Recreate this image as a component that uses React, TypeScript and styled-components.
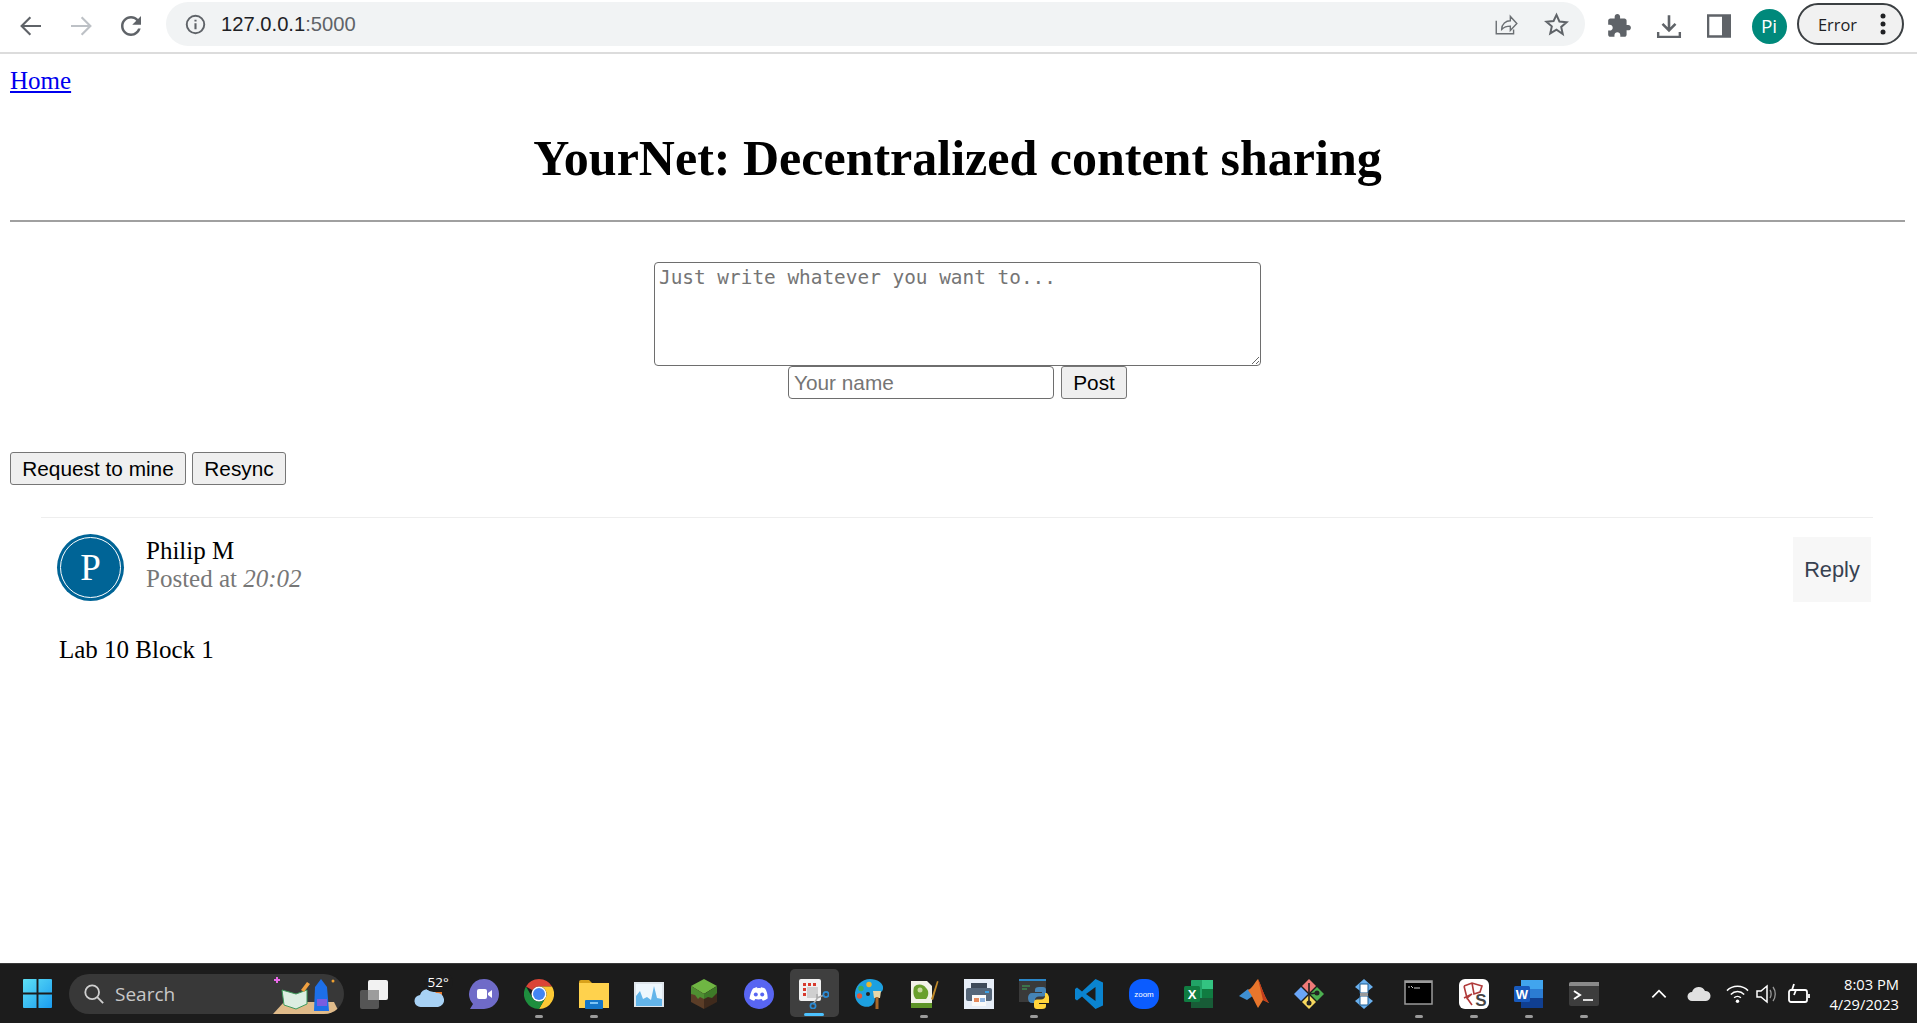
import styled, { createGlobalStyle } from "styled-components";
import type { ReactNode } from "react";

const GlobalStyle = createGlobalStyle`
  html, body { margin: 0; padding: 0; height: 100%; overflow: hidden; background: #fff; }
  body { font-family: "Liberation Serif", "Times New Roman", serif; font-size: 25px; color: #000; }
`;

const Page = styled.div`
  display: flex;
  flex-direction: column;
  height: 1023px;
`;

/* browser chrome */
const Toolbar = styled.header`
  display: flex;
  align-items: center;
  height: 52px;
  flex: none;
  padding-left: 6px;
  border-bottom: 2px solid #dcdcdc;
  background: #fff;
`;
const ToolCell = styled.div`
  display: flex;
  align-items: center;
  justify-content: center;
  width: 50px;
  height: 48px;
`;
const Omnibox = styled.div`
  display: flex;
  align-items: center;
  width: 1419px;
  height: 44px;
  margin: 0 9px 4px 10px;
  padding: 0 16px 0 19px;
  box-sizing: border-box;
  border-radius: 22px;
  background: #f1f3f4;
`;
const Url = styled.span`
  margin-left: 15px;
  font-family: "Liberation Sans", Arial, sans-serif;
  font-size: 20.2px;
  color: #202124;
  span { color: #5f6368; }
`;
const OmniActions = styled.div`
  display: flex;
  align-items: center;
  gap: 25px;
  margin-left: auto;
`;
const Avatar = styled.div`
  display: flex;
  align-items: center;
  justify-content: center;
  width: 35px;
  height: 35px;
  border-radius: 50%;
  background: #00897b;
  color: #fff;
  font-family: "Open Sans", sans-serif;
  font-size: 19px;
`;
const ErrorPill = styled.div`
  display: flex;
  align-items: center;
  justify-content: space-between;
  width: 107px;
  height: 42px;
  margin: 0 0 4px 3px;
  padding: 0 16px 0 19px;
  box-sizing: border-box;
  border: 2px solid #3c4043;
  border-radius: 21px;
  background: #f1f1f1;
  color: #202124;
  font-family: "Open Sans", sans-serif;
  font-size: 16.4px;
`;

/* page content */
const Main = styled.main`
  flex: 1;
  padding: 13px 12px 0 10px;
  overflow: hidden;
`;
const HomeLink = styled.a`
  color: #00e;
  text-decoration: underline;
`;
const Title = styled.h1`
  margin: 34px 0 33px;
  font-size: 50px;
  text-align: center;
`;
const Rule = styled.hr`
  margin: 0;
  height: 2px;
  border: 0;
  background: #a0a0a0;
`;
const PostForm = styled.form`
  display: flex;
  flex-direction: column;
  align-items: center;
  margin-top: 40px;
`;
const Message = styled.textarea`
  display: block;
  width: 607px;
  height: 104px;
  padding: 3px 4px;
  box-sizing: border-box;
  border: 1px solid #6e6e6e;
  border-radius: 4px;
  font-family: "DejaVu Sans Mono", monospace;
  font-size: 19.4px;
  &::placeholder { color: #757575; }
`;
const FormRow = styled.div`
  display: flex;
  gap: 7px;
`;
const NameInput = styled.input`
  width: 266px;
  height: 33px;
  padding: 0 5px;
  box-sizing: border-box;
  border: 1px solid #6e6e6e;
  border-radius: 4px;
  font-family: "Liberation Sans", Arial, sans-serif;
  font-size: 20.8px;
  &::placeholder { color: #757575; }
`;
const Button = styled.button<{ $width: number }>`
  width: ${(p) => p.$width}px;
  height: 33px;
  padding: 0;
  border: 1px solid #767676;
  border-radius: 3px;
  background: #efefef;
  color: #000;
  font-family: "Liberation Sans", Arial, sans-serif;
  font-size: 20.8px;
`;
const Actions = styled.div`
  display: flex;
  gap: 6px;
  margin: 53px 0 32px;
`;
const Card = styled.article`
  margin: 0 32px 0 31px;
  border-top: 1px solid #eee;
`;
const CardHeader = styled.div`
  display: flex;
  align-items: flex-start;
  padding: 16px 2px 0 16px;
`;
const Badge = styled.div`
  position: relative;
  display: flex;
  align-items: center;
  justify-content: center;
  flex: none;
  width: 67px;
  height: 67px;
  border-radius: 50%;
  background: #006496;
  color: #fff;
  font-size: 37px;
  &::after {
    content: "";
    position: absolute;
    inset: 3px;
    border: 1px solid #fff;
    border-radius: 50%;
  }
`;
const Meta = styled.div`
  margin: 3px 0 0 22px;
  line-height: 28px;
`;
const Stamp = styled.div`
  color: #777;
`;
const Reply = styled.div`
  display: flex;
  align-items: center;
  justify-content: center;
  width: 78px;
  height: 65px;
  margin: 3px 0 0 auto;
  background: #f7f7f7;
  color: #374151;
  font-family: "Liberation Sans", Arial, sans-serif;
  font-size: 21.8px;
`;
const CardBody = styled.p`
  margin: 34px 0 0 18px;
  line-height: 28px;
`;

/* windows taskbar */
const Taskbar = styled.footer`
  display: flex;
  align-items: center;
  flex: none;
  height: 60px;
  padding-left: 10px;
  background: #1c1c1c;
  border-top: 1px solid #3a3a3a;
  box-sizing: border-box;
`;
const SearchPill = styled.div`
  position: relative;
  display: flex;
  align-items: center;
  width: 275px;
  height: 40px;
  margin: 0 2.5px 0 4px;
  padding-left: 14px;
  box-sizing: border-box;
  border-radius: 20px;
  background: #383838;
  color: #c8c8c8;
  font-family: "Open Sans", sans-serif;
  font-size: 19px;
  overflow: hidden;
  span { margin-left: 10px; }
`;
const SearchArt = styled.div`
  position: absolute;
  right: 4px;
  top: 0;
  line-height: 0;
`;
const TaskCell = styled.div<{ $active?: boolean }>`
  position: relative;
  display: flex;
  align-items: center;
  justify-content: center;
  flex: none;
  width: 55px;
  height: 58px;
  &::before {
    content: "";
    position: absolute;
    display: ${(p) => (p.$active ? "block" : "none")};
    inset: 4px 3px 6px;
    border-radius: 5px;
    background: #3f3f3f;
  }
  svg { position: relative; }
`;
const RunDot = styled.div<{ $active?: boolean }>`
  position: absolute;
  left: 50%;
  bottom: ${(p) => (p.$active ? "7px" : "5px")};
  width: ${(p) => (p.$active ? "20px" : "8px")};
  height: 3px;
  transform: translateX(-50%);
  border-radius: 2px;
  background: ${(p) => (p.$active ? "#4cc2ff" : "#9a9a9a")};
`;
const TempChip = styled.div`
  position: absolute;
  top: 8px;
  left: 22px;
  padding: 0 4px;
  border-radius: 10px;
  background: #1c1c1c;
  color: #fff;
  font-family: "Open Sans", sans-serif;
  font-size: 13.5px;
  line-height: 19px;
`;
const Tray = styled.div`
  display: flex;
  align-items: center;
  height: 100%;
  margin-left: auto;
  padding-right: 18px;
`;
const TrayCell = styled.div<{ $width: number }>`
  display: flex;
  align-items: center;
  justify-content: center;
  width: ${(p) => p.$width}px;
`;
const Clock = styled.div`
  width: 80px;
  color: #fff;
  font-family: "Open Sans", sans-serif;
  font-size: 14.7px;
  line-height: 20px;
  text-align: right;
  white-space: nowrap;
`;

const Svg = ({ size, box = 24, children }: { size: number; box?: number; children: ReactNode }) => (
  <svg width={size} height={size} viewBox={`0 0 ${box} ${box}`} fill="none">
    {children}
  </svg>
);

const Arrow = ({ flip, color }: { flip?: boolean; color: string }) => (
  <Svg size={30}>
    <path
      d={flip ? "M4 12h15M12.5 5l7 7-7 7" : "M20 12H5M11.5 5l-7 7 7 7"}
      stroke={color}
      strokeWidth="1.7"
    />
  </Svg>
);
const Reload = () => (
  <Svg size={30}>
    <path
      fill="#5f6368"
      d="M17.65 6.35C16.2 4.9 14.21 4 12 4c-4.42 0-7.99 3.58-7.99 8s3.57 8 7.99 8c3.73 0 6.84-2.55 7.73-6h-2.08c-.82 2.33-3.04 4-5.65 4-3.31 0-6-2.69-6-6s2.69-6 6-6c1.66 0 3.14.69 4.22 1.78L13 11h7V4l-2.35 2.35z"
    />
  </Svg>
);
const Info = () => (
  <Svg size={21}>
    <circle cx="12" cy="12" r="10" stroke="#5f6368" strokeWidth="2.2" />
    <path d="M12 10.5v7M12 6.5v2" stroke="#5f6368" strokeWidth="2.4" />
  </Svg>
);
const Share = () => (
  <Svg size={26}>
    <path
      d="M3 9v12h16v-4M8 17c0-5 4-8 8-8V5l6 6.5L16 18v-4c-3 0-6 1-8 3z"
      stroke="#6b6f73"
      strokeWidth="1.3"
    />
  </Svg>
);
const Star = () => (
  <Svg size={25}>
    <path
      d="M12 2.8l2.8 6.3 6.9.7-5.2 4.5 1.5 6.8L12 17l-6 3.6 1.5-6.8-5.2-4.5 6.9-.7z"
      stroke="#5f6368"
      strokeWidth="1.9"
    />
  </Svg>
);
const Puzzle = () => (
  <Svg size={26}>
    <path
      fill="#5f6368"
      d="M20.5 11H19V7c0-1.1-.9-2-2-2h-4V3.5C13 2.12 11.88 1 10.5 1S8 2.12 8 3.5V5H4c-1.1 0-1.99.9-1.99 2v3.8H3.5c1.49 0 2.7 1.21 2.7 2.7s-1.21 2.7-2.7 2.7H2V20c0 1.1.9 2 2 2h3.8v-1.5c0-1.49 1.21-2.7 2.7-2.7 1.49 0 2.7 1.21 2.7 2.7V22H17c1.1 0 2-.9 2-2v-4h1.5c1.38 0 2.5-1.12 2.5-2.5S21.88 11 20.5 11z"
    />
  </Svg>
);
const Download = () => (
  <Svg size={26}>
    <path d="M12 2v13M6 10l6 6 6-6" stroke="#5f6368" strokeWidth="2.4" />
    <path d="M2 17.5V22h20v-4.5" stroke="#5f6368" strokeWidth="2.2" />
  </Svg>
);
const SidePanel = () => (
  <Svg size={24}>
    <path d="M1 1.5h22v21H1z" stroke="#5f6368" strokeWidth="2.6" />
    <path d="M15 1.5h8v21h-8z" fill="#5f6368" />
  </Svg>
);
const Dots = () => (
  <svg width="6" height="24" viewBox="0 0 6 24">
    <circle cx="3" cy="4" r="2.5" fill="#202124" />
    <circle cx="3" cy="12" r="2.5" fill="#202124" />
    <circle cx="3" cy="20" r="2.5" fill="#202124" />
  </svg>
);

const taskIcons: { key: string; dot?: boolean; active?: boolean; chip?: string; art: ReactNode }[] = [
  {
    key: "taskview",
    art: (
      <>
        <rect x="1" y="11" width="19" height="19" rx="2" fill="#555" />
        <rect x="9" y="1" width="20" height="20" rx="2" fill="#f2f2f2" />
        <rect x="9" y="11" width="11" height="10" fill="#9c9c9c" />
      </>
    ),
  },
  {
    key: "weather",
    chip: "52°",
    art: (
      <>
        <rect x="14" y="11" width="14" height="8" fill="#e8792c" />
        <path d="M7 28a6 6 0 0 1-1-12 9 9 0 0 1 16-2 7 7 0 0 1 2 14z" fill="#a8d2f5" />
      </>
    ),
  },
  {
    key: "teams",
    art: (
      <>
        <path d="M15 0a15 15 0 0 1 0 30H1l3-5A15 15 0 0 1 15 0z" fill="#6f6bc8" />
        <rect x="8" y="10" width="10" height="10" rx="2" fill="#fff" />
        <path d="M19 14l4-3v8l-4-3z" fill="#fff" />
      </>
    ),
  },
  {
    key: "chrome",
    dot: true,
    art: (
      <>
        <path d="M15 0a15 15 0 0 1 13 7.5H15a7.5 7.5 0 0 0-6.5 3.75L2 7.5A15 15 0 0 1 15 0z" fill="#db4437" />
        <path d="M28 7.5A15 15 0 0 1 15 30l6.5-11.25A7.5 7.5 0 0 0 15 7.5z" fill="#fcc934" />
        <path d="M15 30A15 15 0 0 1 2 7.5l6.5 11.25a7.5 7.5 0 0 0 13 0z" fill="#1e8e3e" />
        <circle cx="15" cy="15" r="7.5" fill="#fff" />
        <circle cx="15" cy="15" r="6" fill="#4285f4" />
      </>
    ),
  },
  {
    key: "explorer",
    dot: true,
    art: (
      <>
        <path d="M0 3a2 2 0 0 1 2-2h8l3 3h-13z" fill="#d9a21b" />
        <path d="M0 4h30v25H0z" fill="#ffd24d" />
        <rect x="6" y="21" width="18" height="9" rx="1" fill="#1577c9" />
        <rect x="11" y="23" width="8" height="2" fill="#7cc4f5" />
      </>
    ),
  },
  {
    key: "monitor",
    art: (
      <>
        <rect x="0" y="3" width="30" height="25" fill="#dfe6ec" />
        <rect x="2" y="5" width="26" height="21" fill="#eef7fd" />
        <path d="M2 17l4-5 3 8 4-2 4 3 3-14 3 12 5 1v7H2z" fill="#63b5ea" />
      </>
    ),
  },
  {
    key: "minecraft",
    art: (
      <>
        <path d="M15 0l13 7-13 8L2 7z" fill="#6fb643" />
        <path d="M2 7l13 8v15L2 23z" fill="#5b3d27" />
        <path d="M28 7l-13 8v15l13-7z" fill="#3f2a1c" />
        <path d="M2 7l13 8v5l-4-2-2 2-3-4-4-1z" fill="#4f8f32" />
        <path d="M28 7l-13 8v5l4-2 4 1 5-5z" fill="#3e7a28" />
      </>
    ),
  },
  {
    key: "discord",
    art: (
      <>
        <circle cx="15" cy="15" r="15" fill="#5865f2" />
        <path
          d="M9 9.5c2-1 3.5-1.3 4-1.3l.5 1c1-.2 2-.2 3 0l.5-1c.5 0 2 .3 4 1.3 2 3 2.8 6.5 2.6 10-1.6 1.2-3.2 1.9-4.8 2.3l-1.1-1.8c-2 .6-4.4.6-6.4 0l-1.1 1.8c-1.6-.4-3.2-1.1-4.8-2.3C6.2 16 7 12.5 9 9.5z"
          fill="#fff"
        />
        <circle cx="11.8" cy="15.5" r="2" fill="#5865f2" />
        <circle cx="18.2" cy="15.5" r="2" fill="#5865f2" />
      </>
    ),
  },
  {
    key: "snip",
    active: true,
    art: (
      <>
        <rect x="0" y="0" width="22" height="22" rx="2" fill="#f1f1f1" />
        <path d="M4 4h3v3H4zM9 4h3v3H9zM14 4h3v3h-3zM4 9h3v3H4zM4 14h3v3H4z" fill="#d83b2d" />
        <path d="M8 8h11v11H8z" fill="#cfcfcf" />
        <path d="M18 15v5M18 20l-4 5M18 19l7-3" stroke="#aaa" strokeWidth="1.6" />
        <circle cx="27" cy="15.5" r="2.6" stroke="#2a8ad4" strokeWidth="1.7" />
        <circle cx="14" cy="27" r="2.6" stroke="#2a8ad4" strokeWidth="1.7" />
      </>
    ),
  },
  {
    key: "palette",
    art: (
      <>
        <path d="M1 17C0 7 8 0 16 0c7 0 14 4 13 10-.5 4-5 4-7 5-2 2 0 7-3 10-3 5-16 4-18-8z" fill="#1da0e0" />
        <circle cx="15" cy="5.5" r="2.7" fill="#e8b731" />
        <circle cx="7" cy="9.5" r="2.7" fill="#3cae5c" />
        <circle cx="5.5" cy="17" r="2.7" fill="#e0593a" />
        <circle cx="14" cy="15" r="2" fill="#222" />
        <path d="M19 12h8l-1 7h-6z" fill="#e8d7a8" />
        <rect x="21.5" y="18" width="3" height="12" fill="#a8682a" />
      </>
    ),
  },
  {
    key: "notepad",
    dot: true,
    art: (
      <>
        <path d="M2 2h16l5 5v22H2z" fill="#f2f2e8" />
        <path d="M5 8c3-4 10-3 12 1 3 2 3 8 0 11H7c-3-3-3-8-2-12z" fill="#6aa02d" />
        <circle cx="11" cy="11" r="2.5" fill="#c8d8a0" />
        <path d="M2 24h21v5H2z" fill="#5e9428" />
        <path d="M22 20l6-18 1.5.5L24 21z" fill="#c08a2a" />
      </>
    ),
  },
  {
    key: "printer",
    art: (
      <>
        <rect width="30" height="30" fill="#e7eef8" />
        <rect x="7" y="4" width="16" height="6" fill="#3e4a59" />
        <rect x="2" y="9" width="26" height="13" rx="2" fill="#56677a" />
        <rect x="21" y="12" width="4" height="2" fill="#3aa0e6" />
        <rect x="8" y="16" width="14" height="11" fill="#fafafa" />
        <rect x="10" y="19" width="5" height="4" fill="#e58a5c" />
        <rect x="16" y="19" width="5" height="4" fill="#8fb4e0" />
      </>
    ),
  },
  {
    key: "python",
    dot: true,
    art: (
      <>
        <rect x="0" y="0" width="27" height="23" fill="#3a3a3a" />
        <rect x="0" y="0" width="27" height="2" fill="#2a86c8" />
        <path d="M3 7h8M3 10h5" stroke="#3fae5a" strokeWidth="1.2" />
        <path d="M24 8h-4c-3 0-4 1-4 3v2h7v1H13c-2.5 0-4 2-4 5s1.5 5 4 5h3v-3c0-2 1.5-3.5 4-3.5h4c2 0 3-1 3-3V11c0-2-1-3-3-3z" fill="#4584b6" />
        <path d="M19 30h4c3 0 4-1 4-3v-2h-7v-1h10c1 0 .5-10-3-10h-1v3c0 2-1.5 3.5-4 3.5h-4c-2 0-3 1-3 3V27c0 2 1 3 3 3z" fill="#ffd43b" />
      </>
    ),
  },
  {
    key: "vscode",
    art: (
      <>
        <path d="M21.5 0L29 3.5v23L21.5 30 8 17.5 3 21.5 1 20V10l2-1.5 5 4z" fill="#0a84d0" />
        <path d="M21.5 8L12 15l9.5 7z" fill="#1c1c1c" />
      </>
    ),
  },
  {
    key: "zoom",
    art: (
      <>
        <rect width="30" height="30" rx="13" fill="#0b5cff" />
        <text x="15" y="18" textAnchor="middle" fill="#fff" fontFamily="Liberation Sans, sans-serif" fontSize="8">
          zoom
        </text>
      </>
    ),
  },
  {
    key: "excel",
    art: (
      <>
        <rect x="7" y="1" width="22" height="28" rx="1" fill="#21a366" />
        <rect x="18" y="1" width="11" height="9" fill="#33c481" />
        <rect x="7" y="19" width="22" height="10" fill="#185c37" />
        <rect x="18" y="10" width="11" height="9" fill="#107c41" />
        <rect x="0" y="7" width="16" height="16" rx="1.5" fill="#107c41" />
        <text x="8" y="20" textAnchor="middle" fill="#fff" fontFamily="Liberation Sans, sans-serif" fontWeight="700" fontSize="13">
          X
        </text>
      </>
    ),
  },
  {
    key: "matlab",
    art: (
      <>
        <path d="M0 17l9-7 6 6-7 5z" fill="#3f8fd0" />
        <path d="M9 11c4-1 7-8 10-11 3 6 6 17 11 24l-6-3-5 8c-3-5-6-13-10-18z" fill="#e8762c" />
        <path d="M19 0c3 6 6 17 11 24l-6-3z" fill="#c33d1c" />
      </>
    ),
  },
  {
    key: "git",
    art: (
      <>
        <path d="M15 0l7 7-7 7-7-7z" fill="#f07a78" />
        <path d="M23 8l7 7-7 7-7-7z" fill="#4caf50" />
        <path d="M15 16l7 7-7 7-7-7z" fill="#f7d85e" />
        <path d="M7 8l7 7-7 7-7-7z" fill="#6aa6f8" />
        <path d="M15 4v22M15 15l8-1" stroke="#222" strokeWidth="1.6" />
        <circle cx="23" cy="14" r="2.5" fill="#222" />
        <circle cx="15" cy="24" r="2.5" fill="#222" />
      </>
    ),
  },
  {
    key: "sourcetree",
    art: (
      <>
        <path d="M15 0l9 8-9 7-9-7z" fill="#6ab0ee" />
        <path d="M15 15l9 7-9 8-9-8z" fill="#6ab0ee" />
        <rect x="11" y="5" width="8" height="9" fill="#fff" stroke="#1d5c92" />
        <rect x="11" y="17" width="8" height="9" fill="#fff" stroke="#1d5c92" />
        <rect x="11" y="14" width="8" height="3" fill="#9a9a9a" />
      </>
    ),
  },
  {
    key: "cmd",
    dot: true,
    art: (
      <>
        <rect x="1" y="2" width="27" height="23" fill="#000" stroke="#9a9a9a" strokeWidth="1.5" />
        <rect x="1" y="2" width="27" height="2" fill="#9a9a9a" />
        <path d="M4 8h2M7 7l2 2M10 9h6" stroke="#ccc" strokeWidth="1" />
      </>
    ),
  },
  {
    key: "sublime",
    dot: true,
    art: (
      <>
        <rect width="30" height="30" rx="6" fill="#fff" />
        <path d="M5 7l8-3 10 3-2 6-6 2-2-11M5 7l3 12 5-4M8 19l5 7M13 15l-8 4" stroke="#b03a3a" strokeWidth="1.6" />
        <text x="22" y="27" textAnchor="middle" fill="#444" fontFamily="Liberation Sans, sans-serif" fontWeight="700" fontSize="17">
          S
        </text>
      </>
    ),
  },
  {
    key: "word",
    dot: true,
    art: (
      <>
        <rect x="7" y="1" width="22" height="28" rx="1" fill="#2b7cd3" />
        <rect x="7" y="1" width="22" height="9" fill="#41a5ee" />
        <rect x="7" y="19" width="22" height="10" fill="#103f91" />
        <rect x="0" y="7" width="16" height="16" rx="1.5" fill="#185abd" />
        <text x="8" y="20" textAnchor="middle" fill="#fff" fontFamily="Liberation Sans, sans-serif" fontWeight="700" fontSize="13">
          W
        </text>
      </>
    ),
  },
  {
    key: "terminal",
    dot: true,
    art: (
      <>
        <rect x="0" y="3" width="30" height="24" rx="2" fill="#3d3d3d" />
        <path d="M0 5a2 2 0 0 1 2-2h28v4H0z" fill="#8a8a8a" />
        <path d="M5 12l6 4-6 4" stroke="#fff" strokeWidth="2" />
        <path d="M14 21h10" stroke="#ddd" strokeWidth="2" />
      </>
    ),
  },
];

export default function App() {
  return (
    <Page>
      <GlobalStyle />
      <Toolbar>
        <ToolCell><Arrow color="#5f6368" /></ToolCell>
        <ToolCell><Arrow flip color="#bdc1c6" /></ToolCell>
        <ToolCell><Reload /></ToolCell>
        <Omnibox>
          <Info />
          <Url>127.0.0.1<span>:5000</span></Url>
          <OmniActions>
            <Share />
            <Star />
          </OmniActions>
        </Omnibox>
        <ToolCell><Puzzle /></ToolCell>
        <ToolCell><Download /></ToolCell>
        <ToolCell><SidePanel /></ToolCell>
        <ToolCell><Avatar>Pi</Avatar></ToolCell>
        <ErrorPill>
          Error
          <Dots />
        </ErrorPill>
      </Toolbar>

      <Main>
        <HomeLink href="#">Home</HomeLink>
        <Title>YourNet: Decentralized content sharing</Title>
        <Rule />
        <PostForm>
          <Message placeholder="Just write whatever you want to..." />
          <FormRow>
            <NameInput placeholder="Your name" />
            <Button type="button" $width={66}>Post</Button>
          </FormRow>
        </PostForm>
        <Actions>
          <Button type="button" $width={176}>Request to mine</Button>
          <Button type="button" $width={94}>Resync</Button>
        </Actions>
        <Card>
          <CardHeader>
            <Badge>P</Badge>
            <Meta>
              <div>Philip M</div>
              <Stamp>Posted at <i>20:02</i></Stamp>
            </Meta>
            <Reply>Reply</Reply>
          </CardHeader>
          <CardBody>Lab 10 Block 1</CardBody>
        </Card>
      </Main>

      <Taskbar>
        <TaskCell>
          <Svg size={29} box={30}>
            <defs>
              <linearGradient id="winblue" x1="0" y1="0" x2="1" y2="1">
                <stop offset="0" stopColor="#5ee0f5" />
                <stop offset="1" stopColor="#1a9cf0" />
              </linearGradient>
            </defs>
            <path d="M0 1a1 1 0 0 1 1-1h13v14H0zM16 0h13a1 1 0 0 1 1 1v13H16zM0 16h14v14H1a1 1 0 0 1-1-1zM16 16h14v13a1 1 0 0 1-1 1H16z" fill="url(#winblue)" />
          </Svg>
        </TaskCell>
        <SearchPill>
          <Svg size={22}>
            <circle cx="10" cy="10" r="7.5" stroke="#d0d0d0" strokeWidth="2" />
            <path d="M15.5 15.5L22 22" stroke="#d0d0d0" strokeWidth="2" />
          </Svg>
          <span>Search</span>
          <SearchArt>
            <svg width="72" height="40" viewBox="0 0 72 40" fill="none">
              <path d="M5 40l11-12h50l6 12z" fill="#e0bb8a" />
              <path d="M14 16l14 4 11-4v14l-11 5-12-4z" fill="#ddeee2" stroke="#3f9a5c" />
              <path d="M33 16l6-8 3 2-6 8z" fill="#f0a040" />
              <path d="M47 13l6-8 6 8 2 24H46z" fill="#1d6fe8" />
              <rect x="49" y="25" width="10" height="7" fill="#7a5ce0" />
              <path d="M6 6h6M9 3v6" stroke="#e86ae8" strokeWidth="2" />
              <circle cx="65" cy="7" r="1.5" fill="#f0a030" />
            </svg>
          </SearchArt>
        </SearchPill>
        {taskIcons.map((icon) => (
          <TaskCell key={icon.key} $active={icon.active}>
            <Svg size={30} box={30}>{icon.art}</Svg>
            {icon.chip && <TempChip>{icon.chip}</TempChip>}
            {(icon.dot || icon.active) && <RunDot $active={icon.active} />}
          </TaskCell>
        ))}
        <Tray>
          <TrayCell $width={40}>
            <Svg size={16}>
              <path d="M2 17l10-10 10 10" stroke="#fff" strokeWidth="2.6" />
            </Svg>
          </TrayCell>
          <TrayCell $width={40}>
            <Svg size={24}>
              <path d="M5 19a4.500 4.500 0 0 1 0-9 7 7 0 0 1 13-1 5 5 0 0 1 1 10z" fill="#e0e0e0" />
            </Svg>
          </TrayCell>
          <TrayCell $width={36}>
            <Svg size={23}>
              <path d="M1 9c6-6 16-6 22 0M5 13c4-4 10-4 14 0M8.5 16.5c2-2 5-2 7 0" stroke="#fff" strokeWidth="1.5" />
              <circle cx="12" cy="20" r="1.8" fill="#fff" />
            </Svg>
          </TrayCell>
          <TrayCell $width={24}>
            <Svg size={24}>
              <path d="M2 9h4l6-5v16l-6-5H2z" stroke="#fff" strokeWidth="1.5" />
              <path d="M15 8c1.5 2 1.5 6 0 8M18 5c3 4 3 10 0 14" stroke="#999" strokeWidth="1.3" />
            </Svg>
          </TrayCell>
          <TrayCell $width={40}>
            <Svg size={24}>
              <rect x="2" y="8" width="18" height="12" rx="2" stroke="#fff" strokeWidth="1.8" />
              <path d="M22 12v4M7 2L5 8h4l-2 5" stroke="#fff" strokeWidth="1.8" />
            </Svg>
          </TrayCell>
          <Clock>
            8:03 PM
            <br />
            4/29/2023
          </Clock>
        </Tray>
      </Taskbar>
    </Page>
  );
}
